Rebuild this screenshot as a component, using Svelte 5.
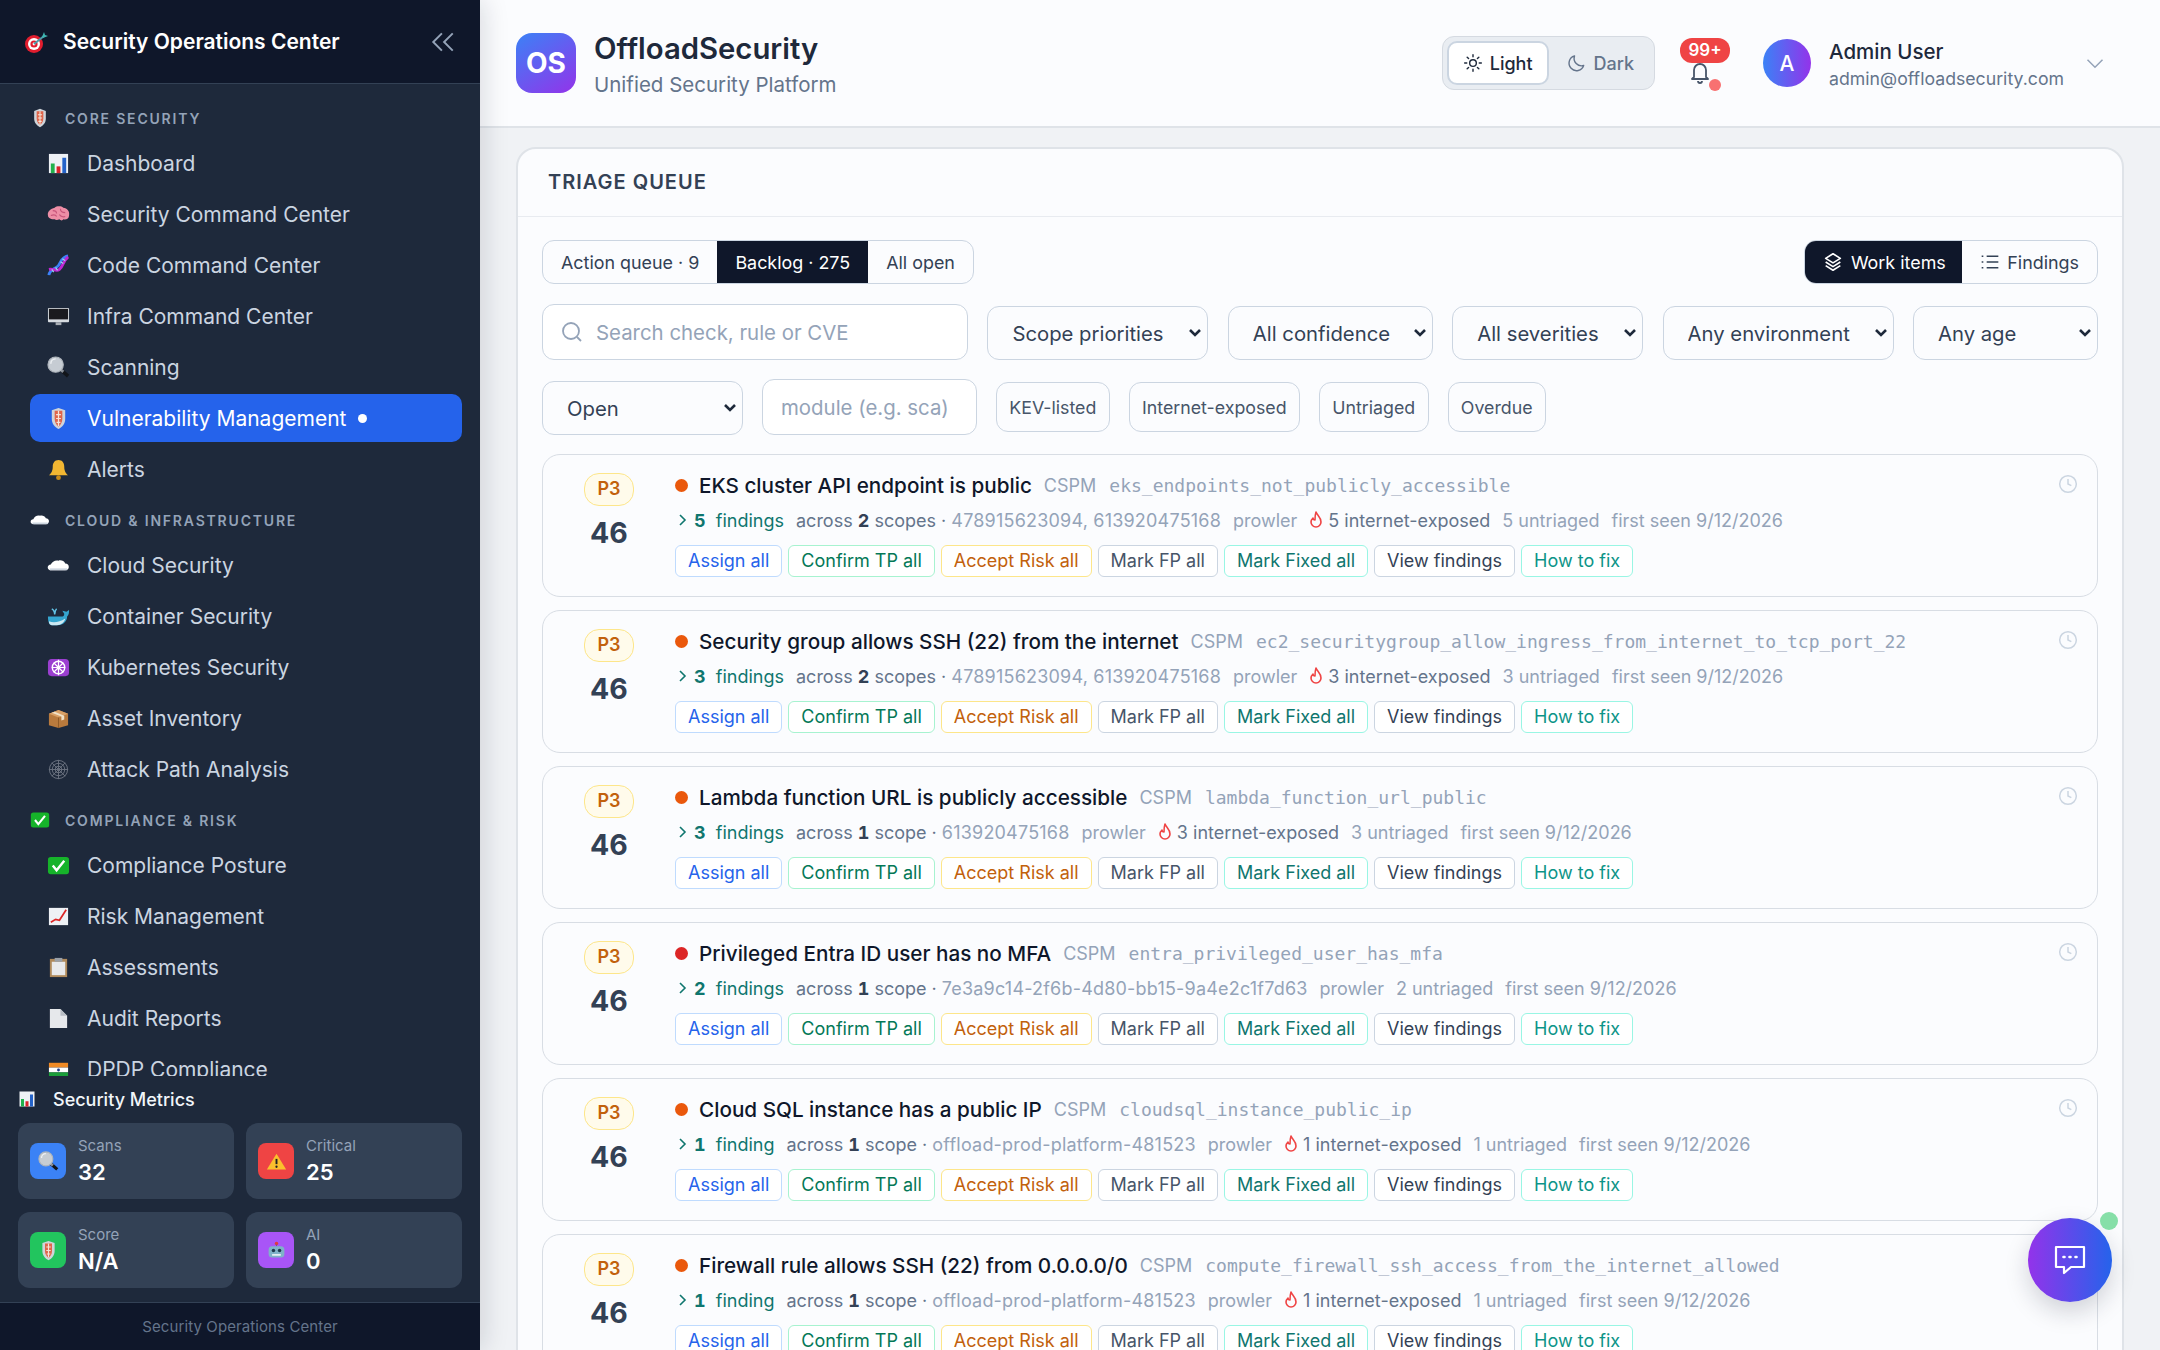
<script>
  // emoji fonts are not available, so the sidebar emoji are small drawings
  const emoji = {
    target: '<circle cx="10" cy="14" r="9" fill="#e11d2e"/><circle cx="10" cy="14" r="6" fill="#fff"/><circle cx="10" cy="14" r="3.6" fill="#e11d2e"/><circle cx="10" cy="14" r="1.4" fill="#fff"/><path d="M10 14 20 6" stroke="#4b9aa8" stroke-width="2"/><path d="M18 7l2-5 1 3 3 1-5 2z" fill="#3fb6b2"/>',
    shield: '<path d="M12 1l7 2.500v9c0 5-3 8.500-7 10.500-4-2-7-5.500-7-10.500v-9z" fill="#cfd4da"/><path d="M8 4h8v8.500c0 3.500-1.700 6-4 8-2.300-2-4-4.500-4-8z" fill="#e0654a"/><path d="M12 4v16M9.500 8h5M9.500 12h5M10 16h4" stroke="#f6e4d8" stroke-width="1.300"/>',
    bars: '<rect x="2" y="2" width="20" height="20" fill="#eef1f5"/><rect x="4" y="12" width="4" height="10" fill="#22b14c"/><rect x="10" y="15" width="4" height="7" fill="#d8232a"/><rect x="16" y="6" width="4" height="16" fill="#2563c9"/>',
    brain: '<path d="M1 13c-1-4 3-7 7-8 2-2 7-2 9 0 4 0 7 4 6 8 0 3-3 5-6 4-1 2-3 1-4 0-2 1-4 1-5 0-3 0-7-1-7-4z" fill="#ee8ea6"/><path d="M6 8c2 0 4 1 4 3M14 6c0 3 2 4 5 4M4 13c3-1 5-1 6 1M13 12c1 2 4 3 6 2" stroke="#c7557a" stroke-width="1.200" fill="none"/>',
    dna: '<path d="M2 22C3 15 9 16 12 12s3-9 10-10" stroke="#3b82f6" stroke-width="3" fill="none"/><path d="M2 16c6-1 7 3 11 0s3-8 9-13" stroke="#c026d3" stroke-width="3" fill="none"/><path d="M5 16l2 3M9 14l2 3M14 8l3 2M16 5l3 2" stroke="#9bd3e8" stroke-width="1.300"/>',
    monitor: '<rect x="1" y="3" width="22" height="15" rx="1" fill="#d7dbe0"/><rect x="2" y="4" width="20" height="11" fill="#1a1a1e"/><rect x="9" y="18" width="6" height="3" fill="#a9aeb5"/>',
    search: '<path d="M14 14l8 7" stroke="#12151a" stroke-width="3.600"/><path d="M14 14l3 2.600" stroke="#8a9099" stroke-width="3"/><circle cx="9" cy="9" r="8" fill="#c6ccd3" stroke="#aeb4bb" stroke-width="1.200"/><path d="M4 8a5 5 0 0 1 5-5" stroke="#eef1f4" stroke-width="1.500" fill="none"/>',
    bell: '<path d="M12 2c4 0 6 3 6 7 0 5 2 7 4 9H2c2-2 4-4 4-9 0-4 2-7 6-7z" fill="#f2b632"/><circle cx="12" cy="20.500" r="2.500" fill="#c98a18"/>',
    cloud: '<path d="M5 17c-6 0-5-6-1-6 1-3 5-5 8-4 2-1 6 0 7 3 5 0 5 7 0 7z" fill="#fff"/><path d="M3 16h18" stroke="#cdd6e0" stroke-width="2"/>',
    whale: '<path d="M1 12h14c2 0 3-1 3-3l-2-3c2 0 3 1 4 1s2-1 3-2c0 3 0 5-2 7 0 5-4 9-10 9H5c-3 0-4-4-4-9z" fill="#35a6d0"/><path d="M2 17c5 2 11 1 17-3-1 4-4 7-9 7H5c-2 0-3-2-3-4z" fill="#cde8f2"/><path d="M8 10c0-3 1-5 2-6M8 10c0-3-1-5-3-6" stroke="#63c3e6" stroke-width="1.500" fill="none"/>',
    wheel: '<rect x="1" y="3" width="22" height="18" rx="4" fill="#9b3fd0"/><circle cx="12" cy="12" r="6.500" fill="none" stroke="#fff" stroke-width="1.500"/><path d="M12 4v16M5 12h14M7 7l10 10M17 7 7 17" stroke="#fff" stroke-width="1.300"/>',
    box: '<path d="M2 7l10-4 10 4v12l-10 3-10-3z" fill="#b97a3d"/><path d="M2 7l10 4 10-4-10-4z" fill="#d9a066"/><path d="M12 11v11" stroke="#8e5a28"/><path d="M5 6l10 4v4l3-1V9L8 5z" fill="#f1e1c6"/>',
    web: '<g stroke="#6b7280" fill="none" stroke-width="1"><path d="M12 2v20M2 12h20M5 5l14 14M19 5 5 19"/><circle cx="12" cy="12" r="3.500"/><circle cx="12" cy="12" r="6.500"/><circle cx="12" cy="12" r="9.500"/></g>',
    check: '<rect x="1" y="3" width="22" height="18" rx="3" fill="#16b32a"/><path d="M6 12l4 5 8-10" stroke="#fff" stroke-width="2.500" fill="none"/>',
    chart: '<rect x="2" y="3" width="20" height="18" fill="#eef1f5"/><path d="M4 18l5-3 4 1 7-11" stroke="#dc2626" stroke-width="1.800" fill="none"/>',
    clipboard: '<rect x="3" y="3" width="18" height="19" fill="#b08a5b"/><rect x="5" y="6" width="14" height="14" fill="#e8e9eb"/><rect x="8" y="2" width="8" height="4" fill="#9aa0a8"/>',
    doc: '<path d="M3 2h11l7 7v13H3z" fill="#e6e8eb"/><path d="M14 2l7 7h-7z" fill="#b8bdc4"/>',
    flag: '<rect x="2" y="5" width="20" height="5" fill="#f08a24"/><rect x="2" y="10" width="20" height="5" fill="#fff"/><rect x="2" y="15" width="20" height="5" fill="#1a9e3a"/><circle cx="12" cy="12.500" r="1.500" fill="#1e3a8a"/>',
    warn: '<path d="M12 3l11 18H1z" fill="#fbc02d"/><path d="M12 9v6" stroke="#222" stroke-width="2.200"/><circle cx="12" cy="18" r="1.300" fill="#222"/>',
    robot: '<rect x="3" y="7" width="18" height="13" rx="4" fill="#7fb2c8"/><circle cx="8.500" cy="12" r="2" fill="#1d3a4d"/><circle cx="15.500" cy="12" r="2" fill="#1d3a4d"/><rect x="7" y="16" width="10" height="2" fill="#e4eef3"/><circle cx="12" cy="4" r="2" fill="#e23b3b"/><path d="M12 5v2" stroke="#667"/>'
  }

  const sections = [
    { label: 'CORE SECURITY', icon: 'shield', items: [
      ['Dashboard', 'bars'], ['Security Command Center', 'brain'], ['Code Command Center', 'dna'],
      ['Infra Command Center', 'monitor'], ['Scanning', 'search'], ['Vulnerability Management', 'shield', true], ['Alerts', 'bell']
    ] },
    { label: 'CLOUD & INFRASTRUCTURE', icon: 'cloud', items: [
      ['Cloud Security', 'cloud'], ['Container Security', 'whale'], ['Kubernetes Security', 'wheel'],
      ['Asset Inventory', 'box'], ['Attack Path Analysis', 'web']
    ] },
    { label: 'COMPLIANCE & RISK', icon: 'check', items: [
      ['Compliance Posture', 'check'], ['Risk Management', 'chart'], ['Assessments', 'clipboard'],
      ['Audit Reports', 'doc'], ['DPDP Compliance', 'flag']
    ] }
  ]

  const metrics = [
    { label: 'Scans', value: '32', icon: 'search', bg: '#3b82f6' },
    { label: 'Critical', value: '25', icon: 'warn', bg: '#ef4444' },
    { label: 'Score', value: 'N/A', icon: 'shield', bg: '#22c55e' },
    { label: 'AI', value: '0', icon: 'robot', bg: '#a855f7' }
  ]

  const twoScopes = '478915623094, 613920475168'
  const rows = [
    { title: 'EKS cluster API endpoint is public', rule: 'eks_endpoints_not_publicly_accessible', n: 5, scopes: 2, ids: twoScopes, exposed: 5 },
    { title: 'Security group allows SSH (22) from the internet', rule: 'ec2_securitygroup_allow_ingress_from_internet_to_tcp_port_22', n: 3, scopes: 2, ids: twoScopes, exposed: 3 },
    { title: 'Lambda function URL is publicly accessible', rule: 'lambda_function_url_public', n: 3, scopes: 1, ids: '613920475168', exposed: 3 },
    { title: 'Privileged Entra ID user has no MFA', rule: 'entra_privileged_user_has_mfa', n: 2, scopes: 1, ids: '7e3a9c14-2f6b-4d80-bb15-9a4e2c1f7d63', exposed: 0, red: true },
    { title: 'Cloud SQL instance has a public IP', rule: 'cloudsql_instance_public_ip', n: 1, scopes: 1, ids: 'offload-prod-platform-481523', exposed: 1 },
    { title: 'Firewall rule allows SSH (22) from 0.0.0.0/0', rule: 'compute_firewall_ssh_access_from_the_internet_allowed', n: 1, scopes: 1, ids: 'offload-prod-platform-481523', exposed: 1 }
  ]

  const actions = [
    ['Assign all', 'blue'], ['Confirm TP all', 'green'], ['Accept Risk all', 'amber'], ['Mark FP all', 'slate'],
    ['Mark Fixed all', 'teal'], ['View findings', 'plain'], ['How to fix', 'cyan']
  ]

  const selects = ['Scope priorities', 'All confidence', 'All severities', 'Any environment', 'Any age']
  const selectWidths = [221, 205, 191, 231, 185]
</script>

{#snippet glyph(name, size)}
  <svg class="glyph" width={size} height={size} viewBox="0 0 24 24">{@html emoji[name]}</svg>
{/snippet}

{#snippet dropdown(opt, width)}
  <div class="select" style="width: {width}px">
    <select><option>{opt}</option></select>
    <svg width="14" height="10" viewBox="0 0 14 10" fill="none" stroke="#1e293b" stroke-width="2.600">
      <path d="M2 2l5 5 5-5" />
    </svg>
  </div>
{/snippet}

<div class="app">
  <aside class="sidebar">
    <div class="brand">
      {@render glyph('target', 24)}
      <span class="brand-name">Security Operations Center</span>
      <svg class="collapse" width="26" height="26" viewBox="0 0 24 24" fill="none" stroke="#94a3b8" stroke-width="1.800">
        <path d="M11 4 3 12l8 8M21 4l-8 8 8 8" />
      </svg>
    </div>

    <nav>
      {#each sections as s}
        <div class="section-label">
          <span class="section-icon">{@render glyph(s.icon, 20)}</span>
          {s.label}
        </div>
        {#each s.items as [name, icon, active]}
          <div class="nav-item" class:active>
            <span class="nav-icon">{@render glyph(icon, 23)}</span>
            {name}
            {#if active}<i class="live"></i>{/if}
          </div>
        {/each}
      {/each}
    </nav>

    <div class="metrics">
      <div class="metrics-title">
        <span class="metrics-icon">{@render glyph('bars', 18)}</span>
        Security Metrics
      </div>
      <div class="metric-grid">
        {#each metrics as m}
          <div class="metric">
            <span class="metric-icon" style="background: {m.bg}">{@render glyph(m.icon, 21)}</span>
            <div>
              <div class="metric-label">{m.label}</div>
              <div class="metric-value">{m.value}</div>
            </div>
          </div>
        {/each}
      </div>
    </div>

    <div class="side-foot">Security Operations Center</div>
  </aside>

  <main>
    <header class="topbar">
      <div class="logo">OS</div>
      <div class="titles">
        <div class="title">OffloadSecurity</div>
        <div class="subtitle">Unified Security Platform</div>
      </div>

      <div class="theme">
        <button class="theme-btn on">
          <svg width="20" height="20" viewBox="0 0 24 24" fill="none" stroke="currentColor" stroke-width="1.700" stroke-linecap="round">
            <circle cx="12" cy="12" r="4" />
            <path d="M12 2v2.500M12 19.500V22M2 12h2.500M19.500 12H22M5 5l1.700 1.700M17.300 17.300 19 19M5 19l1.700-1.700M17.300 6.700 19 5" />
          </svg>
          Light
        </button>
        <button class="theme-btn">
          <svg width="20" height="20" viewBox="0 0 24 24" fill="none" stroke="currentColor" stroke-width="1.700" stroke-linejoin="round">
            <path d="M20 15A9 9 0 0 1 9 3.500 9 9 0 1 0 20 15z" />
          </svg>
          Dark
        </button>
      </div>

      <div class="bell">
        <svg width="24" height="24" viewBox="0 0 24 24" fill="none" stroke="#475569" stroke-width="1.800" stroke-linejoin="round">
          <path d="M6 17V10a6 6 0 0 1 12 0v7l2 2H4z" />
          <path d="M10 21a2 2 0 0 0 4 0" />
        </svg>
        <span class="badge">99+</span>
        <i class="ping"></i>
      </div>

      <div class="avatar">A</div>
      <div class="who">
        <div class="who-name">Admin User</div>
        <div class="who-mail">admin@offloadsecurity.com</div>
      </div>
      <svg class="who-chev" width="20" height="20" viewBox="0 0 24 24" fill="none" stroke="#94a3b8" stroke-width="1.800">
        <path d="M3 8l9 9 9-9" />
      </svg>
    </header>

    <section class="panel">
      <h2>TRIAGE QUEUE</h2>
      <div class="panel-body">
        <div class="row-top">
          <div class="seg">
            <button>Action queue · 9</button>
            <button class="on">Backlog · 275</button>
            <button>All open</button>
          </div>
          <div class="seg">
            <button class="on with-icon">
              <svg width="22" height="22" viewBox="0 0 24 24" fill="none" stroke="currentColor" stroke-width="1.800" stroke-linejoin="round">
                <path d="M12 3l8 5-8 5-8-5z" />
                <path d="M4 12l8 5 8-5M4 16l8 5 8-5" />
              </svg>
              Work items
            </button>
            <button class="with-icon">
              <svg width="20" height="20" viewBox="0 0 24 24" fill="none" stroke="currentColor" stroke-width="1.800">
                <path d="M8 5h14M8 12h14M8 19h14M2 5h2M2 12h2M2 19h2" />
              </svg>
              Findings
            </button>
          </div>
        </div>

        <div class="row-filters">
          <div class="search">
            <svg width="24" height="24" viewBox="0 0 24 24" fill="none" stroke="#94a3b8" stroke-width="1.800">
              <circle cx="11" cy="11" r="8" />
              <path d="M17 17l4 4" />
            </svg>
            <span>Search check, rule or CVE</span>
          </div>
          {#each selects as opt, i}
            {@render dropdown(opt, selectWidths[i])}
          {/each}
        </div>

        <div class="row-extra">
          {@render dropdown('Open', 201)}
          <div class="module">module (e.g. sca)</div>
          <button class="chip">KEV-listed</button>
          <button class="chip">Internet-exposed</button>
          <button class="chip">Untriaged</button>
          <button class="chip">Overdue</button>
        </div>

        <div class="cards">
          {#each rows as r}
            <article class="card">
              <div class="score">
                <span class="pill">P3</span>
                <span class="num">46</span>
              </div>
              <div class="info">
                <div class="line-title">
                  <i class="sev" class:red={r.red}></i>
                  <span class="name">{r.title}</span>
                  <span class="kind">CSPM</span>
                  <code>{r.rule}</code>
                </div>
                <div class="line-meta">
                  <svg class="expand" width="14" height="16" viewBox="0 0 14 16" fill="none" stroke="#0f766e" stroke-width="1.600">
                    <path d="M4 3l5 5-5 5" />
                  </svg>
                  <span class="count"><b>{r.n}</b>&nbsp; {r.n === 1 ? 'finding' : 'findings'}</span>
                  <span>across <b class="dark">{r.scopes}</b> {r.scopes === 1 ? 'scope' : 'scopes'} · <span class="light ids">{r.ids}</span></span>
                  <span class="light">prowler</span>
                  {#if r.exposed}
                    <span class="exposed">
                      <svg width="14" height="18" viewBox="0 0 14 18" fill="none" stroke="#ef4444" stroke-width="1.600" stroke-linejoin="round">
                        <path d="M7 1c1 3 5 5 5 10a5 5 0 0 1-10 0c0-2 1-3 2-4 0 2 1 2 2 2 0-3 0-5 1-8z" />
                      </svg>
                      {r.exposed} internet-exposed
                    </span>
                  {/if}
                  <span class="light">{r.n} untriaged</span>
                  <span class="light">first seen 9/12/2026</span>
                </div>
                <div class="line-actions">
                  {#each actions as [text, tone]}
                    <button class="act {tone}">{text}</button>
                  {/each}
                </div>
              </div>
              <svg class="clock" width="20" height="20" viewBox="0 0 24 24" fill="none" stroke="#cbd5e1" stroke-width="1.800">
                <circle cx="12" cy="12" r="10" />
                <path d="M12 6v6l4 2" />
              </svg>
            </article>
          {/each}
        </div>
      </div>
    </section>

    <button class="fab" aria-label="Open chat">
      <svg width="32" height="32" viewBox="0 0 32 32" fill="none" stroke="#fff" stroke-width="2.200" stroke-linejoin="round">
        <path d="M2 3h28v20H17l-7 6v-6H2z" />
        <path d="M9.500 13h1M15.500 13h1M21.500 13h1" stroke-linecap="round" stroke-width="2.600" />
      </svg>
    </button>
    <i class="online"></i>
  </main>
</div>

<style>
  :global(body) {
    overflow: hidden;
    font-family: Inter, "Noto Sans", sans-serif;
  }
  button, select {
    font-family: inherit;
  }
  .app {
    display: flex;
    width: 2160px;
    height: 1350px;
    overflow: hidden;
    background: #f0f2f5;
  }
  .glyph {
    display: block;
  }

  /* sidebar */
  .sidebar {
    display: flex;
    flex-direction: column;
    flex: 0 0 480px;
    position: relative;
    z-index: 2;
    background: #1e293b;
    box-shadow: 4px 0 24px rgba(15, 23, 42, 0.14);
  }
  .brand {
    display: flex;
    align-items: center;
    height: 84px;
    flex-shrink: 0;
    padding: 0 24px;
    box-sizing: border-box;
    background: #0f172a;
    border-bottom: 1px solid #334155;
  }
  .brand-name {
    margin-left: 15px;
    color: #fff;
    font-size: 21px;
    font-weight: 600;
  }
  .collapse {
    margin-left: auto;
  }
  nav {
    flex: 1;
    min-height: 0;
    overflow: hidden;
    padding: 23px 18px 0 30px;
  }
  .section-label {
    display: flex;
    align-items: center;
    height: 22px;
    margin-bottom: 10px;
    color: #94a3b8;
    font-size: 14px;
    font-weight: 600;
    letter-spacing: 1.800px;
  }
  .nav-item + .section-label {
    margin-top: 16px;
  }
  .section-icon {
    width: 35px;
  }
  .nav-item {
    display: flex;
    align-items: center;
    height: 48px;
    margin-bottom: 3px;
    padding-left: 17px;
    border-radius: 10px;
    color: #cbd5e1;
    font-size: 21px;
  }
  .nav-icon {
    width: 40px;
  }
  .nav-item.active {
    background: #2563eb;
    color: #fff;
  }
  .live {
    width: 9px;
    height: 9px;
    margin-left: 12px;
    border-radius: 50%;
    background: #fff;
  }
  .metrics {
    height: 226px;
    flex-shrink: 0;
    padding: 12px 18px 0;
    box-sizing: border-box;
    background: #1e293b;
  }
  .metrics-title {
    display: flex;
    align-items: center;
    height: 22px;
    margin-bottom: 13px;
    color: #f1f5f9;
    font-size: 18px;
    font-weight: 500;
  }
  .metrics-icon {
    width: 35px;
  }
  .metric-grid {
    display: grid;
    grid-template-columns: 1fr 1fr;
    gap: 13px 12px;
  }
  .metric {
    display: flex;
    align-items: center;
    gap: 12px;
    height: 76px;
    padding: 0 12px;
    border-radius: 12px;
    background: #334155;
  }
  .metric-icon {
    display: flex;
    align-items: center;
    justify-content: center;
    width: 36px;
    height: 36px;
    border-radius: 8px;
  }
  .metric-label {
    color: #94a3b8;
    font-size: 15px;
    line-height: 18px;
  }
  .metric-value {
    margin-top: 3px;
    color: #fff;
    font-size: 22px;
    font-weight: 600;
    line-height: 28px;
  }
  .side-foot {
    height: 48px;
    flex-shrink: 0;
    box-sizing: border-box;
    background: #0f172a;
    border-top: 1px solid #334155;
    color: #64748b;
    font-size: 15px;
    letter-spacing: 0.100px;
    line-height: 47px;
    text-align: center;
  }

  /* main */
  main {
    flex: 1;
    min-width: 0;
    position: relative;
  }
  .topbar {
    display: flex;
    align-items: center;
    height: 128px;
    box-sizing: border-box;
    padding: 0 55px 0 36px;
    background: #fbfcfe;
    border-bottom: 2px solid #dfe3e8;
  }
  .logo {
    display: flex;
    align-items: center;
    justify-content: center;
    width: 60px;
    height: 60px;
    border-radius: 16px;
    background: linear-gradient(145deg, #3b82f6, #9333ea);
    color: #fff;
    font-size: 28px;
    font-weight: 700;
  }
  .titles {
    margin-left: 18px;
    padding-top: 2px;
  }
  .title {
    color: #1e293b;
    font-size: 29.300px;
    font-weight: 600;
    line-height: 40px;
  }
  .subtitle {
    margin-top: 1px;
    color: #64748b;
    font-size: 20.500px;
    line-height: 30px;
  }
  .theme {
    display: flex;
    align-items: center;
    gap: 2px;
    height: 54px;
    margin-left: auto;
    padding: 0 4px;
    box-sizing: border-box;
    border: 1px solid #d5dae1;
    border-radius: 12px;
    background: #e9edf2;
  }
  .theme-btn {
    display: flex;
    align-items: center;
    gap: 7px;
    height: 44px;
    padding: 0 14px;
    border: 2px solid transparent;
    border-radius: 10px;
    background: none;
    color: #64748b;
    font-size: 18px;
    font-weight: 500;
  }
  .theme-btn.on {
    border-color: #cbd5e1;
    background: #fff;
    color: #1e293b;
  }
  .bell {
    position: relative;
    width: 50px;
    height: 50px;
    margin-left: 25px;
  }
  .bell svg {
    position: absolute;
    left: 8px;
    top: 22px;
  }
  .badge {
    position: absolute;
    left: 0;
    top: 0;
    width: 50px;
    height: 25px;
    border-radius: 12px;
    background: #ef4444;
    color: #fff;
    font-size: 17px;
    font-weight: 600;
    line-height: 25px;
    text-align: center;
  }
  .ping {
    position: absolute;
    left: 29px;
    top: 41px;
    width: 12px;
    height: 12px;
    border-radius: 50%;
    background: #f87171;
  }
  .avatar {
    display: flex;
    align-items: center;
    justify-content: center;
    width: 48px;
    height: 48px;
    margin-left: 33px;
    border-radius: 50%;
    background: linear-gradient(90deg, #3b82f6, #9333ea);
    color: #fff;
    font-size: 21px;
    font-weight: 500;
  }
  .who {
    margin-left: 18px;
    padding-top: 4px;
  }
  .who-name {
    color: #1e293b;
    font-size: 20.500px;
    font-weight: 500;
    line-height: 28px;
  }
  .who-mail {
    color: #64748b;
    font-size: 17.700px;
    line-height: 26px;
  }
  .who-chev {
    margin-left: 21px;
  }

  .panel {
    height: 1300px;
    margin: 19px 36px 0 36px;
    border: 2px solid #dfe3e8;
    border-radius: 20px;
    box-sizing: border-box;
    background: #fbfcfe;
  }
  h2 {
    margin: 0;
    height: 67px;
    padding-left: 30px;
    border-bottom: 1px solid #e8ebf0;
    color: #334155;
    font-size: 20px;
    font-weight: 600;
    letter-spacing: 1px;
    line-height: 66px;
  }
  .panel-body {
    padding: 23px 24px 0;
  }
  .row-top {
    display: flex;
    justify-content: space-between;
  }
  .seg {
    display: flex;
    height: 44px;
    overflow: hidden;
    border: 1.500px solid #cbd5e1;
    border-radius: 12px;
    box-sizing: border-box;
  }
  .seg button {
    display: flex;
    align-items: center;
    gap: 8px;
    padding: 0 18px;
    border: 0;
    background: none;
    color: #334155;
    font-size: 17.900px;
  }
  .seg .with-icon {
    gap: 7px;
    padding: 0 18px;
  }
  .seg .on.with-icon {
    padding: 0 16.500px;
  }
  .seg .on {
    background: #0f172a;
    color: #fff;
  }
  .row-filters {
    display: flex;
    align-items: flex-end;
    justify-content: space-between;
    margin-top: 20px;
  }
  .search, .module {
    display: flex;
    align-items: center;
    box-sizing: border-box;
    border: 1.500px solid #cbd5e1;
    border-radius: 12px;
    background: #fff;
    color: #94a3b8;
    font-size: 20.400px;
  }
  .search {
    gap: 12px;
    width: 426px;
    height: 56px;
    padding-left: 17px;
  }
  .select {
    position: relative;
    height: 54px;
  }
  .select svg {
    position: absolute;
    right: 6px;
    top: 22px;
    pointer-events: none;
  }
  select {
    appearance: none;
    width: 100%;
    height: 100%;
    padding: 0 12px 0 24px;
    box-sizing: border-box;
    border: 1.500px solid #cbd5e1;
    border-radius: 12px;
    background-color: #fbfcfe;
    color: #334155;
    font-size: 20.300px;
  }
  .row-extra {
    display: flex;
    align-items: center;
    gap: 19px;
    margin-top: 19px;
    height: 56px;
  }
  .row-extra .select {
    align-self: flex-end;
  }
  .module {
    width: 215px;
    height: 56px;
    padding-left: 18px;
  }
  .chip {
    height: 50px;
    padding: 0 12.300px;
    border: 1.500px solid #cbd5e1;
    border-radius: 12px;
    background: none;
    color: #475569;
    font-size: 17.800px;
  }

  .cards {
    display: flex;
    flex-direction: column;
    gap: 13px;
    margin-top: 18.500px;
  }
  .card {
    display: flex;
    position: relative;
    flex-shrink: 0;
    height: 143px;
    box-sizing: border-box;
    border: 1.500px solid #d8dde4;
    border-radius: 18px;
  }
  .score {
    display: flex;
    flex-direction: column;
    align-items: center;
    flex: 0 0 132px;
    padding-top: 18px;
  }
  .pill {
    width: 50px;
    height: 33px;
    box-sizing: border-box;
    border: 1.500px solid #fde68a;
    border-radius: 15px;
    background: #fffbeb;
    color: #c2610c;
    font-size: 18px;
    font-weight: 600;
    line-height: 30px;
    text-align: center;
  }
  .num {
    margin-top: 8px;
    color: #334155;
    font-size: 28.500px;
    font-weight: 700;
    line-height: 38px;
  }
  .info {
    padding-top: 16px;
    min-width: 0;
  }
  .line-title {
    display: flex;
    align-items: center;
    height: 30px;
  }
  .sev {
    width: 13px;
    height: 13px;
    margin-right: 11px;
    border-radius: 50%;
    background: #ea580c;
  }
  .sev.red {
    background: #dc2626;
  }
  .name {
    color: #0f172a;
    font-size: 20.700px;
    font-weight: 500;
  }
  .kind {
    margin-left: 12px;
    color: #94a3b8;
    font-size: 18px;
  }
  code {
    margin-left: 13px;
    color: #94a3b8;
    font-family: "DejaVu Sans Mono", monospace;
    font-size: 18px;
  }
  .line-meta {
    display: flex;
    align-items: center;
    gap: 12px;
    height: 30px;
    margin-top: 4.500px;
    color: #64748b;
    font-size: 18px;
  }
  .line-meta b {
    font-variant-numeric: tabular-nums;
  }
  .ids {
    letter-spacing: 0.200px;
  }
  .expand {
    margin-right: -8px;
    margin-left: 1px;
  }
  .count {
    color: #0f766e;
  }
  .dark {
    color: #334155;
  }
  .light {
    color: #94a3b8;
  }
  .exposed {
    display: flex;
    align-items: center;
    gap: 5px;
    color: #64748b;
  }
  .line-actions {
    display: flex;
    gap: 6px;
    margin-top: 10px;
  }
  .act {
    height: 32px;
    padding: 0 12px;
    border: 1.500px solid;
    border-radius: 6px;
    background: #fff;
    font-size: 18px;
    line-height: 28px;
  }
  .blue { color: #2563eb; border-color: #bfdbfe; }
  .green { color: #047857; border-color: #a7f3d0; }
  .amber { color: #c2610c; border-color: #fde68a; }
  .slate { color: #475569; border-color: #cbd5e1; }
  .teal { color: #0f766e; border-color: #99f6e4; }
  .plain { color: #334155; border-color: #cbd5e1; }
  .cyan { color: #0d9488; border-color: #99f6e4; }
  .clock {
    position: absolute;
    right: 19px;
    top: 19px;
  }

  .fab {
    position: absolute;
    right: 48px;
    top: 1218px;
    display: flex;
    align-items: center;
    justify-content: center;
    width: 84px;
    height: 84px;
    border: 0;
    border-radius: 50%;
    background: linear-gradient(90deg, #9333ea, #2563eb);
    box-shadow: 0 10px 24px rgba(15, 23, 42, 0.18);
  }
  .online {
    position: absolute;
    right: 42px;
    top: 1212px;
    width: 18px;
    height: 18px;
    border-radius: 50%;
    background: #86dfa8;
  }
</style>
